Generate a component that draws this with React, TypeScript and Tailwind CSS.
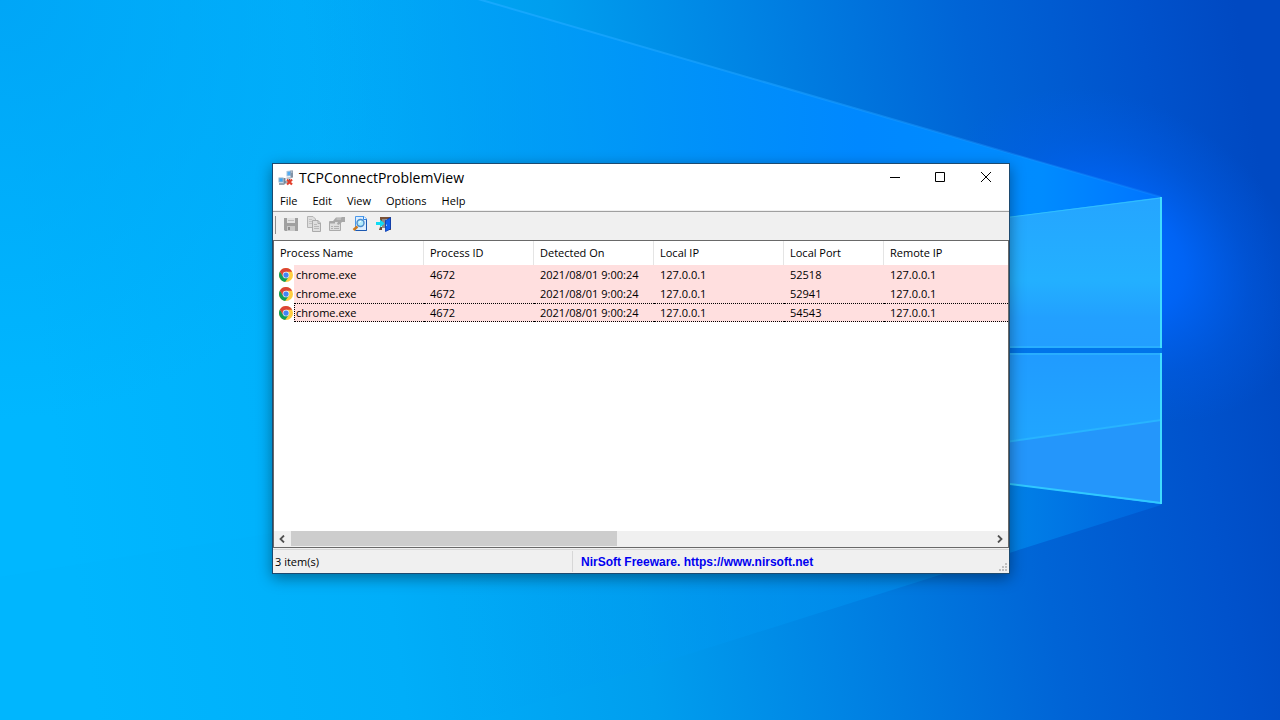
import type { ReactNode } from 'react'

type Connection = {
  process: string
  pid: number
  detected: string
  localIp: string
  localPort: number
  remoteIp: string
}

const menus = ['File', 'Edit', 'View', 'Options', 'Help']

const connections: Connection[] = [
  { process: 'chrome.exe', pid: 4672, detected: '2021/08/01 9:00:24', localIp: '127.0.0.1', localPort: 52518, remoteIp: '127.0.0.1' },
  { process: 'chrome.exe', pid: 4672, detected: '2021/08/01 9:00:24', localIp: '127.0.0.1', localPort: 52941, remoteIp: '127.0.0.1' },
  { process: 'chrome.exe', pid: 4672, detected: '2021/08/01 9:00:24', localIp: '127.0.0.1', localPort: 54543, remoteIp: '127.0.0.1' },
]

const focusedRow = 2

function Wallpaper() {
  return (
    <svg
      className="absolute inset-0 h-full w-full"
      viewBox="0 0 1280 720"
      preserveAspectRatio="xMidYMid slice"
      aria-hidden="true"
    >
      <defs>
        <linearGradient id="sky" gradientUnits="userSpaceOnUse" x1="60" y1="480" x2="1280" y2="300">
          <stop offset="0" stopColor="#00b7ff" />
          <stop offset="0.25" stopColor="#00affa" />
          <stop offset="0.45" stopColor="#009eee" />
          <stop offset="0.6" stopColor="#0084e4" />
          <stop offset="0.78" stopColor="#0064d6" />
          <stop offset="0.92" stopColor="#0052cc" />
          <stop offset="1" stopColor="#0049c2" />
        </linearGradient>
        <radialGradient id="corner" gradientUnits="userSpaceOnUse" cx="0" cy="0" r="420">
          <stop offset="0" stopColor="#00a4f6" stopOpacity="0.9" />
          <stop offset="1" stopColor="#00a4f6" stopOpacity="0" />
        </radialGradient>
        <linearGradient id="beam" gradientUnits="userSpaceOnUse" x1="300" y1="0" x2="1160" y2="0">
          <stop offset="0" stopColor="#00a4fa" stopOpacity="0" />
          <stop offset="0.35" stopColor="#0098fa" stopOpacity="0.8" />
          <stop offset="0.65" stopColor="#0088ff" />
          <stop offset="0.86" stopColor="#008cff" />
          <stop offset="1" stopColor="#0074ff" />
        </linearGradient>
        <linearGradient id="under" gradientUnits="userSpaceOnUse" x1="440" y1="0" x2="1160" y2="0">
          <stop offset="0" stopColor="#00a4f4" stopOpacity="0" />
          <stop offset="0.5" stopColor="#0096f2" stopOpacity="0.5" />
          <stop offset="0.8" stopColor="#0084ea" stopOpacity="0.85" />
          <stop offset="1" stopColor="#006ce6" stopOpacity="0.6" />
        </linearGradient>
        <linearGradient id="edge" gradientUnits="userSpaceOnUse" x1="440" y1="0" x2="1160" y2="0">
          <stop offset="0" stopColor="#1aacff" stopOpacity="0.9" />
          <stop offset="1" stopColor="#1a90ff" stopOpacity="0.3" />
        </linearGradient>
        <radialGradient
          id="glow"
          gradientUnits="userSpaceOnUse"
          cx="0"
          cy="0"
          r="1"
          gradientTransform="translate(1120 255) rotate(35) scale(200 150)"
        >
          <stop offset="0" stopColor="#0070ff" />
          <stop offset="0.35" stopColor="#0068ff" stopOpacity="0.8" />
          <stop offset="0.7" stopColor="#0062f4" stopOpacity="0.3" />
          <stop offset="1" stopColor="#0060f0" stopOpacity="0" />
        </radialGradient>
        <linearGradient id="paneTop" x1="0" y1="0" x2="0" y2="1">
          <stop offset="0" stopColor="#25a5ff" />
          <stop offset="0.55" stopColor="#23b0ff" />
          <stop offset="0.8" stopColor="#22a0ff" />
          <stop offset="1" stopColor="#229eff" />
        </linearGradient>
        <linearGradient id="paneBottom" x1="0" y1="0" x2="0" y2="1">
          <stop offset="0" stopColor="#209bff" />
          <stop offset="0.6" stopColor="#20a6ff" />
          <stop offset="1" stopColor="#22a8ff" />
        </linearGradient>
      </defs>
      <rect width="1280" height="720" fill="url(#sky)" />
      <rect width="420" height="420" fill="url(#corner)" />
      <rect x="860" width="420" height="560" fill="url(#glow)" />
      <path d="M300 -52 L1161 197 V352 H300 Z" fill="url(#beam)" />
      <path d="M1161 352 V505 L480 720 H300 V352 Z" fill="url(#under)" />
      <path d="M440 -12 L1161 197" stroke="url(#edge)" strokeWidth="2" />
      <path d="M0 577 L480 500 V720 H0 Z" fill="#00a4ec" fillOpacity="0.06" />
      <path d="M900 231 L1162 197 V348 H900 Z" fill="url(#paneTop)" />
      <path d="M900 348 H1162 V353 H900 Z" fill="#0074ea" />
      <path d="M900 353 H1162 V504 L900 470 Z" fill="url(#paneBottom)" />
      <path d="M900 457 L1162 419 V504 L900 470 Z" fill="#2496fb" />
      <path d="M900 457 L1161 420" fill="none" stroke="#28b4ff" strokeWidth="2" />
      <path d="M900 231 L1161 198 M900 347 H1161 M900 354 H1161" fill="none" stroke="#30c0ff" strokeWidth="1" />
      <path d="M900 470 L1161 503" fill="none" stroke="#30c8ff" strokeWidth="2" />
      <path d="M1161 197 V348 M1161 353 V504" fill="none" stroke="#40dcff" strokeWidth="2" />
    </svg>
  )
}

function AppIcon() {
  return (
    <svg className="h-4 w-4 shrink-0" viewBox="0 0 16 16" aria-hidden="true">
      <path d="M8.5 1 L13 0.5 V6 L8.5 6.5 Z" fill="#a9c4dc" />
      <path d="M9.5 2 L12.5 1.6 V5 L9.5 5.4 Z" fill="#52acf2" />
      <path d="M12.5 0.5 H15 V7.5 L12.5 8 Z" fill="#8292a6" />
      <path d="M13 2 H14.5" stroke="#d4dde6" />
      <path d="M8.5 7.5 L13 7 V8.5 L8.5 9 Z" fill="#b4bec8" />
      <path d="M0.5 7.5 H5.5 V12.5 H0.5 Z" fill="#8fb0cc" />
      <path d="M1.5 8.5 H4.5 V11.5 H1.5 Z" fill="#3ca8f4" />
      <path d="M5.5 8 H7.5 V14 H5.5 Z" fill="#74869a" />
      <path d="M1 13 H6.5 V15 H1 Z" fill="#98a4b0" />
      <path d="M7 12 H10 M11.5 9 V11" stroke="#4f6274" />
      <path d="M9 9.5 L14 14.5 M14 9.5 L9 14.5" stroke="#e23f2c" strokeWidth="2.2" />
    </svg>
  )
}

function ChromeIcon() {
  return (
    <svg className="h-[14px] w-[14px]" viewBox="0 0 48 48" aria-hidden="true">
      <circle cx="24" cy="24" r="24" fill="#ffcd40" />
      <path d="M24 24 L14.5 29.5 L3.2 12 A24 24 0 0 0 21 47.8 L34 29.7 Z" fill="#0f9d58" />
      <path d="M3.2 12 A24 24 0 0 1 44.8 12.5 H24 L14 29.7 Z" fill="#db4437" />
      <circle cx="24" cy="24" r="11.5" fill="#f1f1f1" />
      <circle cx="24" cy="24" r="9" fill="#4285f4" />
    </svg>
  )
}

function SaveIcon() {
  return (
    <svg className="h-4 w-4" viewBox="0 0 16 16" aria-hidden="true">
      <path d="M1 2 H15 V15 H2 L1 14 Z" fill="#a0a0a0" />
      <path d="M4 2 H12 V7 H4 Z" fill="#e2e2e2" />
      <path d="M5 4.5 H11" stroke="#bdbdbd" />
      <path d="M4 10 H12 V15 H4 Z" fill="#c9c9c9" />
      <path d="M5 11 H7 V14 H5 Z" fill="#8e8e8e" />
    </svg>
  )
}

function CopyIcon() {
  return (
    <svg className="h-4 w-4" viewBox="0 0 16 16" aria-hidden="true">
      <path d="M1.5 0.5 H7 L9.5 3 V11.5 H1.5 Z" fill="#dedede" stroke="#b4b4b4" />
      <path d="M3 3.5 H6 M3 5.5 H6 M3 7.5 H6" stroke="#c2c2c2" />
      <path d="M6.5 4.5 H12 L14.5 7 V15.5 H6.5 Z" fill="#dedede" stroke="#ababab" />
      <path d="M12 4.5 V7.5 H14.5" fill="none" stroke="#ababab" />
      <path d="M8 8.5 H11 M8 10.5 H13 M8 12.5 H13" stroke="#b8b8b8" />
    </svg>
  )
}

function PropertiesIcon() {
  return (
    <svg className="h-4 w-4" viewBox="0 0 16 16" aria-hidden="true">
      <path d="M0.5 5.5 H11.5 V14.5 H0.5 Z" fill="#dedede" stroke="#ababab" />
      <path d="M1 6.5 H6" stroke="#a6a6a6" strokeWidth="2" />
      <path d="M2 10.5 H4 M5 10.5 H10 M2 12.5 H4 M5 12.5 H10" stroke="#b0b0b0" />
      <path d="M4 5 L7 1.5 H12 L13 1 H16 V6 H13 L11 8 L9 9 L8 7.5 L9.5 5.5 H6 L5 6.5 Z" fill="#a8a8a8" />
      <path d="M7.5 3 H12" stroke="#cfcfcf" />
    </svg>
  )
}

function FindIcon() {
  return (
    <svg className="h-4 w-4" viewBox="0 0 16 16" aria-hidden="true">
      <path d="M3.5 0.5 H12 L14.5 3 V14.5 H3.5 Z" fill="#dceeff" stroke="#4a98ea" />
      <path d="M14.5 3 V14.5 H3.5" fill="none" stroke="#1c58b0" />
      <path d="M11.5 0.5 V3.5 H14.5" fill="#fff" stroke="#2f86e6" />
      <path d="M5.5 10.5 L1.5 14" stroke="#d07a1c" strokeWidth="2.5" />
      <circle cx="8.5" cy="7" r="3.5" fill="#b4ecfc" stroke="#4c8ccc" strokeWidth="1.4" />
      <path d="M7 6.5 L9 5" stroke="#fff" />
    </svg>
  )
}

function ExitIcon() {
  return (
    <svg className="h-4 w-4" viewBox="0 0 16 16" aria-hidden="true">
      <path d="M5 1 H16 V14 H14 V3 H7 V6 H5 Z" fill="#7a5238" />
      <path d="M7 3 H11 V12 H7 Z" fill="#8c8c8c" />
      <path d="M5 11 H7 V14 H4 Z" fill="#6b4a35" />
      <path d="M10.5 4.5 L15.5 1.5 V13 L10.5 15.5 Z" fill="#0f62f4" stroke="#0638ac" strokeWidth="0.8" />
      <path d="M11.5 8.5 V10" stroke="#8fd0ff" />
      <path d="M1 6 H5 V3.5 L9.5 7.5 L5 11.5 V9 H1 Z" fill="#10dcf4" />
    </svg>
  )
}

const tools: { label: string; icon: ReactNode; disabled: boolean }[] = [
  { label: 'Save', icon: <SaveIcon />, disabled: true },
  { label: 'Copy', icon: <CopyIcon />, disabled: true },
  { label: 'Properties', icon: <PropertiesIcon />, disabled: true },
  { label: 'Find', icon: <FindIcon />, disabled: false },
  { label: 'Exit', icon: <ExitIcon />, disabled: false },
]

function TitleBar() {
  return (
    <header className="flex h-[27px] items-center">
      <div className="flex flex-1 items-center gap-[5px] pl-[5px]">
        <AppIcon />
        <h1 className="text-[14px] leading-5">TCPConnectProblemView</h1>
      </div>
      <button type="button" aria-label="Minimize" className="flex h-full w-[46px] items-center justify-center">
        <svg className="h-[11px] w-[11px]" viewBox="0 0 11 11">
          <path d="M1 5.5 H11" stroke="#000" />
        </svg>
      </button>
      <button type="button" aria-label="Maximize" className="flex h-full w-[46px] items-center justify-center">
        <svg className="h-[11px] w-[11px]" viewBox="0 0 11 11">
          <path d="M0.5 0.5 H9.5 V9.5 H0.5 Z" fill="none" stroke="#000" />
        </svg>
      </button>
      <button type="button" aria-label="Close" className="flex h-full w-[46px] items-center justify-center">
        <svg className="h-[11px] w-[11px]" viewBox="0 0 11 11">
          <path d="M0 0 L10 10 M10 0 L0 10" stroke="#000" />
        </svg>
      </button>
    </header>
  )
}

function ConnectionTable() {
  const cell = 'h-[19px] border-y border-dotted bg-[#ffdfdf] p-0 pl-1.5'

  return (
    <table className="w-full table-fixed border-separate border-spacing-0 text-left whitespace-nowrap">
      <thead>
        <tr className="h-[24px]">
          <th className="w-[150px] border-r border-[#e5e5e5] p-0 pl-1.5 font-normal">Process Name</th>
          <th className="w-[110px] border-r border-[#e5e5e5] p-0 pl-1.5 font-normal">Process ID</th>
          <th className="w-[120px] border-r border-[#e5e5e5] p-0 pl-1.5 font-normal">Detected On</th>
          <th className="w-[130px] border-r border-[#e5e5e5] p-0 pl-1.5 font-normal">Local IP</th>
          <th className="w-[100px] border-r border-[#e5e5e5] p-0 pl-1.5 font-normal">Local Port</th>
          <th className="p-0 pl-1.5 font-normal">Remote IP</th>
        </tr>
      </thead>
      <tbody>
        {connections.map((row, index) => {
          const border = index === focusedRow ? 'border-black' : 'border-transparent'
          return (
            <tr key={row.localPort}>
              <td className="p-0">
                <div className="flex h-[19px] items-center">
                  <span className="flex w-5 justify-center pl-1">
                    <ChromeIcon />
                  </span>
                  <span className={`h-full flex-1 border-y border-l border-dotted bg-[#ffdfdf] pl-px leading-[17px] ${border}`}>
                    {row.process}
                  </span>
                </div>
              </td>
              <td className={`${cell} ${border}`}>{row.pid}</td>
              <td className={`${cell} ${border}`}>{row.detected}</td>
              <td className={`${cell} ${border}`}>{row.localIp}</td>
              <td className={`${cell} ${border}`}>{row.localPort}</td>
              <td className={`${cell} ${border}`}>{row.remoteIp}</td>
            </tr>
          )
        })}
      </tbody>
    </table>
  )
}

function ScrollBar() {
  return (
    <div className="flex h-4 bg-[#f0f0f0]">
      <button type="button" aria-label="Scroll left" className="flex w-[17px] items-center justify-center">
        <svg className="h-2 w-2" viewBox="0 0 8 8">
          <path d="M5 0.5 L1.5 4 L5 7.5" fill="none" stroke="#505050" strokeWidth="1.8" />
        </svg>
      </button>
      <div className="flex-1">
        <div className="h-[15px] w-[326px] max-w-full bg-[#cdcdcd]" />
      </div>
      <button type="button" aria-label="Scroll right" className="flex w-[17px] items-center justify-center">
        <svg className="h-2 w-2" viewBox="0 0 8 8">
          <path d="M2 0.5 L5.5 4 L2 7.5" fill="none" stroke="#505050" strokeWidth="1.8" />
        </svg>
      </button>
    </div>
  )
}

function StatusBar() {
  return (
    <footer className="mt-px flex h-6 border-t border-[#d7d7d7] bg-[#f0f0f0] pt-px">
      <div className="mb-px flex w-[300px] items-center border-r border-[#d7d7d7] pl-0.5">3 item(s)</div>
      <div className="flex flex-1 items-center pl-2">
        <a href="https://www.nirsoft.net" className="font-['Liberation_Sans',Arial,sans-serif] text-[12px] font-bold text-[#0000f0]">
          NirSoft Freeware. https://www.nirsoft.net
        </a>
      </div>
      <svg className="h-[11px] w-[11px] self-end" viewBox="0 0 11 11" aria-hidden="true">
        <path d="M7 1h2v2h-2z M4 4h2v2h-2z M7 4h2v2h-2z M1 7h2v2h-2z M4 7h2v2h-2z M7 7h2v2h-2z" fill="#bfbfbf" />
      </svg>
    </footer>
  )
}

export default function App() {
  return (
    <main className="relative flex min-h-screen flex-col overflow-hidden bg-[#0092f0] pt-[163px] pr-[270px] pb-[146px] pl-[272px] font-['Open_Sans','Noto_Sans',sans-serif] text-[11px] leading-4 text-black">
      <Wallpaper />
      <section className="relative flex flex-1 flex-col border border-[#1c4a70] bg-[#f0f0f0] shadow-[0_4px_14px_rgba(0,0,0,0.4)]">
        <div className="bg-white">
          <TitleBar />
          <nav className="flex h-[19px] gap-px">
            {menus.map((menu) => (
              <button key={menu} type="button" className="px-[7px]">
                {menu}
              </button>
            ))}
          </nav>
        </div>
        <div className="mt-px flex h-[29px] items-start border-t border-[#a0a0a0] pt-1 pl-0.5">
          <span className="mr-0.5 h-[18px] w-px bg-[#8c8c8c]" />
          {tools.map((tool) => (
            <button
              key={tool.label}
              type="button"
              aria-label={tool.label}
              disabled={tool.disabled}
              className="flex w-[23px] justify-center pl-[3px]"
            >
              {tool.icon}
            </button>
          ))}
        </div>
        <div className="flex flex-1 flex-col border border-[#696969] bg-white">
          <div className="flex-1 overflow-hidden">
            <ConnectionTable />
          </div>
          <ScrollBar />
        </div>
        <StatusBar />
      </section>
    </main>
  )
}
